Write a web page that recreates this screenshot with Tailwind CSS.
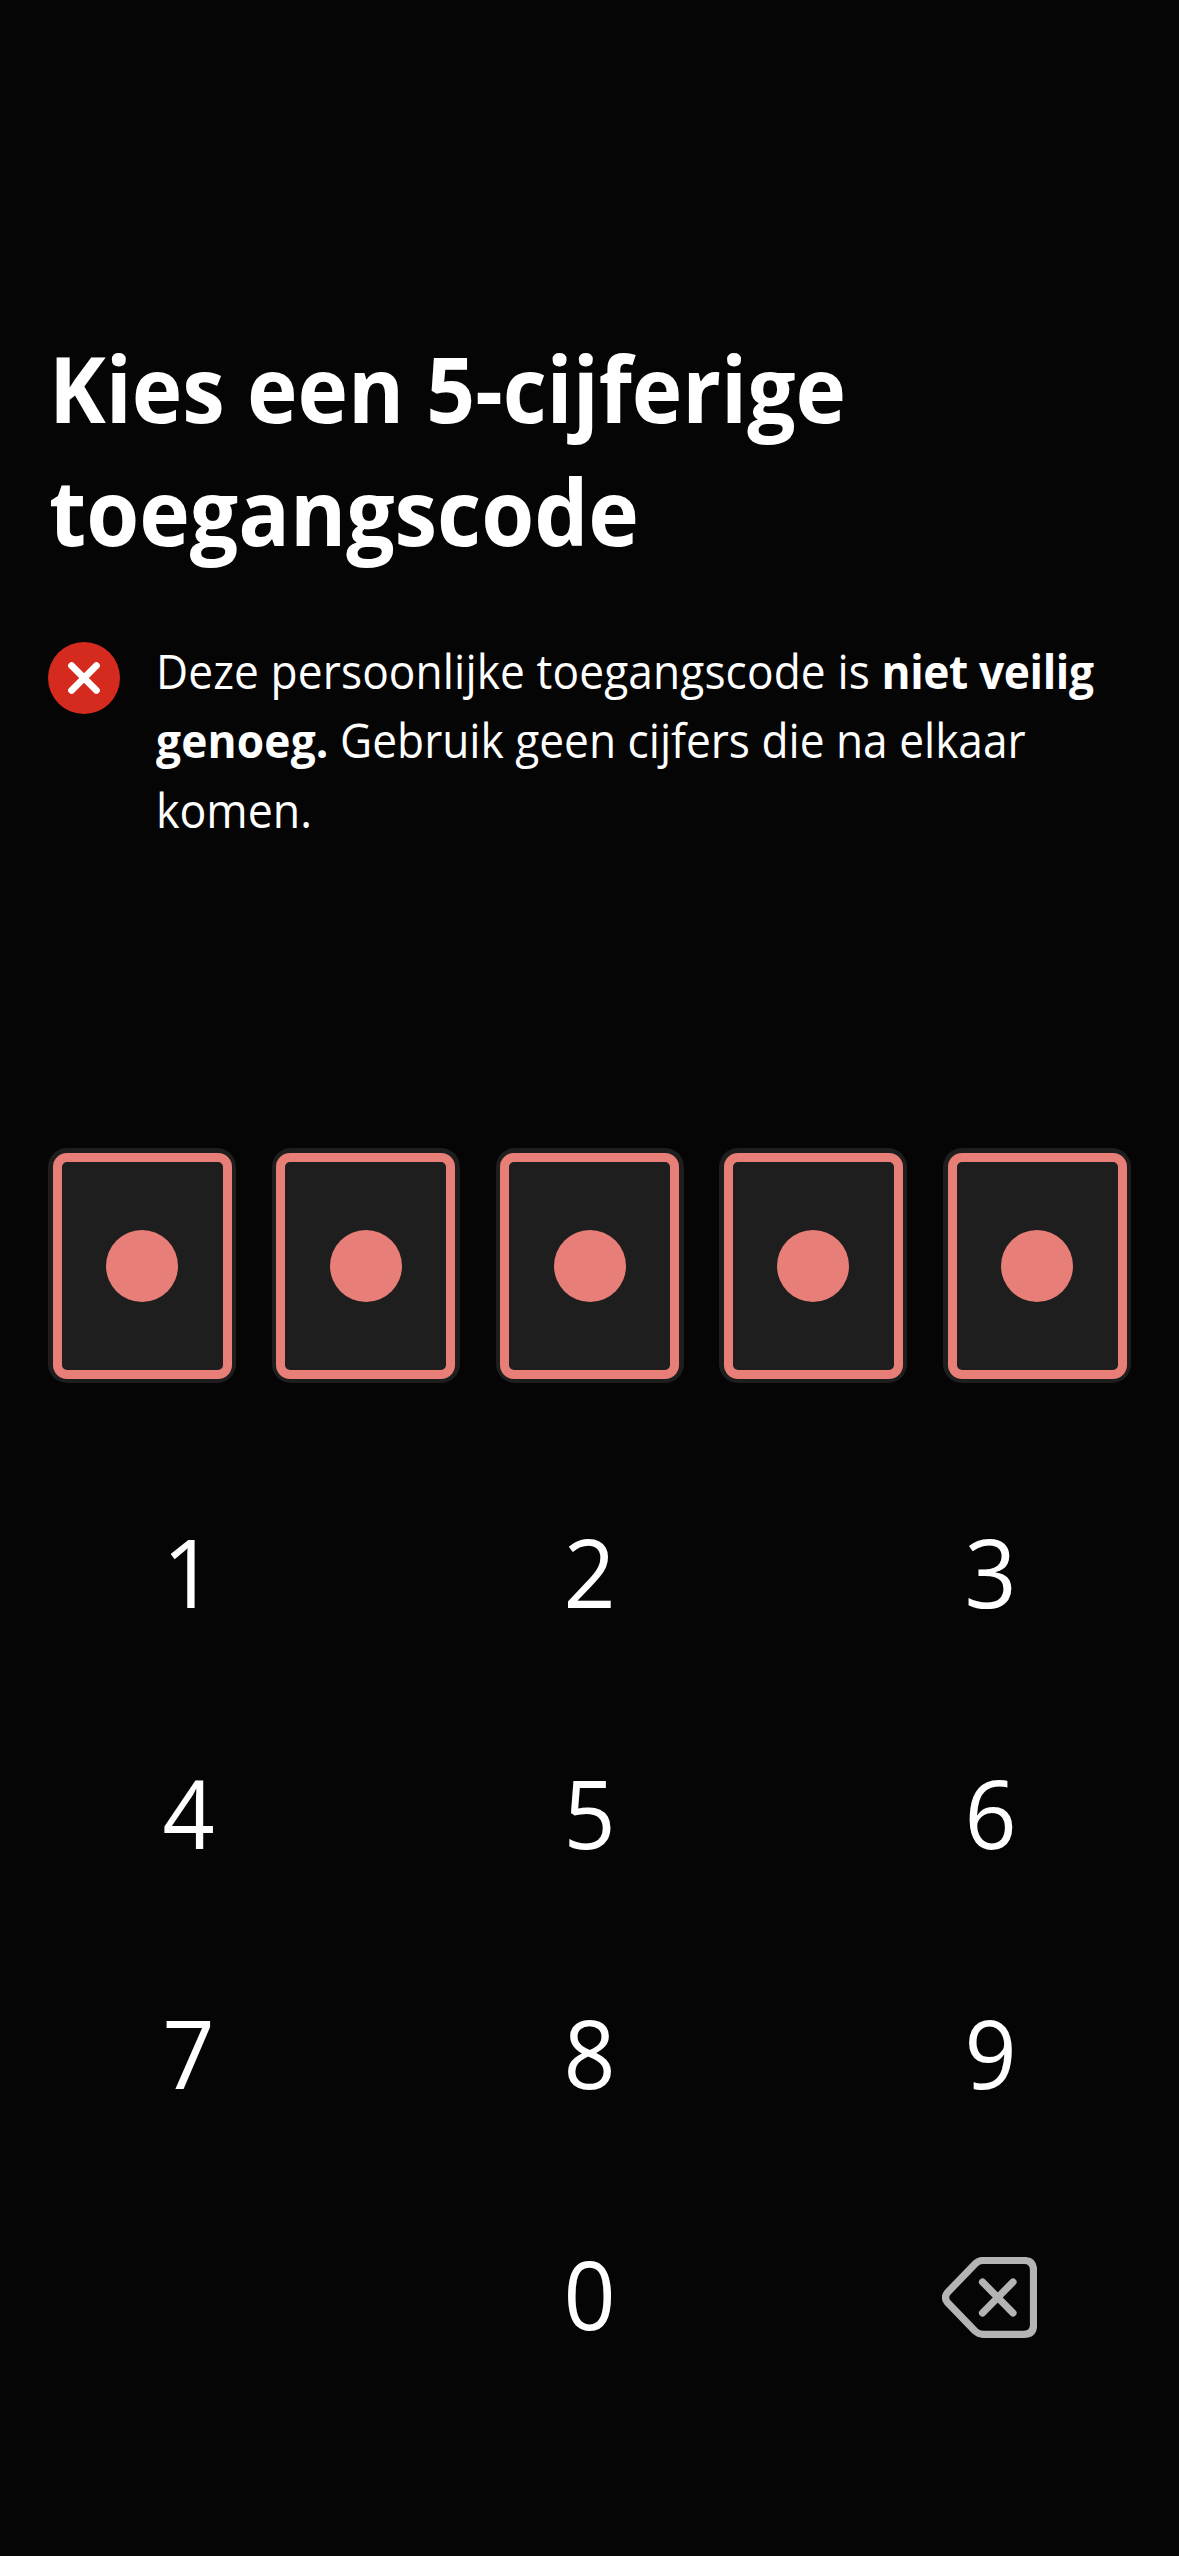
<!DOCTYPE html>
<html lang="nl">
<head>
<meta charset="utf-8">
<title>Toegangscode kiezen</title>
<script src="https://cdn.jsdelivr.net/npm/@tailwindcss/browser@4"></script>
</head>
<body class="bg-[#050505] text-white font-['Open_Sans',sans-serif]">
<main class="flex h-[2556px] w-[1179px] flex-col overflow-hidden pt-[327px]">
  <h1 class="pr-12 pl-[49px] text-[91px] leading-[123px] font-bold whitespace-nowrap">
    <span class="block w-max origin-left scale-x-[.939]">Kies een 5-cijferige</span>
    <span class="block w-max origin-left scale-x-[.941]">toegangscode</span>
  </h1>

  <section class="mt-[62px] flex gap-9 px-12">
    <svg class="mt-[7px] size-[72px] shrink-0" viewBox="0 0 72 72" fill="none">
      <circle cx="36" cy="36" r="36" fill="#d52b1e"/>
      <path d="M23.6 23.6 48.4 48.4M48.4 23.6 23.6 48.4" stroke="#fff" stroke-width="6.9" stroke-linecap="round"/>
    </svg>
    <p class="pt-[1.5px] text-[47px] leading-[69.67px] whitespace-nowrap">
      <span class="block w-max origin-left scale-x-[.941]"><span class="tracking-[0.13px]">Deze persoonlijke toegangscode is </span><b class="font-bold tracking-[-0.4px]">niet veilig</b></span>
      <span class="block w-max origin-left scale-x-[.941]"><b class="font-bold tracking-[0.2px]">genoeg.</b> Gebruik geen cijfers die na elkaar</span>
      <span class="block w-max origin-left scale-x-[.951]">komen.</span>
    </p>
  </section>

  <section class="mt-[302.5px] flex justify-between px-12">
    <div class="h-[235px] w-[188px] rounded-[19px] bg-[#1e1e1e] p-[4.5px]"><div class="flex h-full items-center justify-center rounded-[14px] border-[9px] border-[#e77f78]"><div class="size-[72px] rounded-full bg-[#e77f78]"></div></div></div>
    <div class="h-[235px] w-[188px] rounded-[19px] bg-[#1e1e1e] p-[4.5px]"><div class="flex h-full items-center justify-center rounded-[14px] border-[9px] border-[#e77f78]"><div class="size-[72px] rounded-full bg-[#e77f78]"></div></div></div>
    <div class="h-[235px] w-[188px] rounded-[19px] bg-[#1e1e1e] p-[4.5px]"><div class="flex h-full items-center justify-center rounded-[14px] border-[9px] border-[#e77f78]"><div class="size-[72px] rounded-full bg-[#e77f78]"></div></div></div>
    <div class="h-[235px] w-[188px] rounded-[19px] bg-[#1e1e1e] p-[4.5px]"><div class="flex h-full items-center justify-center rounded-[14px] border-[9px] border-[#e77f78]"><div class="size-[72px] rounded-full bg-[#e77f78]"></div></div></div>
    <div class="h-[235px] w-[188px] rounded-[19px] bg-[#1e1e1e] p-[4.5px]"><div class="flex h-full items-center justify-center rounded-[14px] border-[9px] border-[#e77f78]"><div class="size-[72px] rounded-full bg-[#e77f78]"></div></div></div>
  </section>

  <section class="mt-20 grid grid-cols-3 gap-x-6 gap-y-[24.5px] text-center text-8xl leading-[216px]">
    <button class="h-[216px] scale-x-95">1</button>
    <button class="h-[216px] scale-x-95">2</button>
    <button class="h-[216px] scale-x-95">3</button>
    <button class="h-[216px] scale-x-95">4</button>
    <button class="h-[216px] scale-x-95">5</button>
    <button class="h-[216px] scale-x-95">6</button>
    <button class="h-[216px] scale-x-95">7</button>
    <button class="h-[216px] scale-x-95">8</button>
    <button class="h-[216px] scale-x-95">9</button>
    <button class="col-start-2 h-[216px] scale-x-95">0</button>
    <button class="flex h-[216px] items-center justify-center pt-[10px] pr-[2px]" aria-label="Wissen">
      <svg class="h-[81px] w-[95px]" viewBox="0 0 95 81" fill="none" stroke="#b4b4b4" stroke-width="7.2" stroke-linecap="round" stroke-linejoin="round">
        <path d="M41 3.5H82Q91.500 3.500 91.500 13V68Q91.500 77.300 82 77.300H41Q36.500 77.300 33 74L5.500 45.500Q1.500 40.500 5.500 35.500L33 7Q36.500 3.500 41 3.500Z"/>
        <path d="M40.500 25 71 56M71 25 40.500 56"/>
      </svg>
    </button>
  </section>
</main>
</body>
</html>
